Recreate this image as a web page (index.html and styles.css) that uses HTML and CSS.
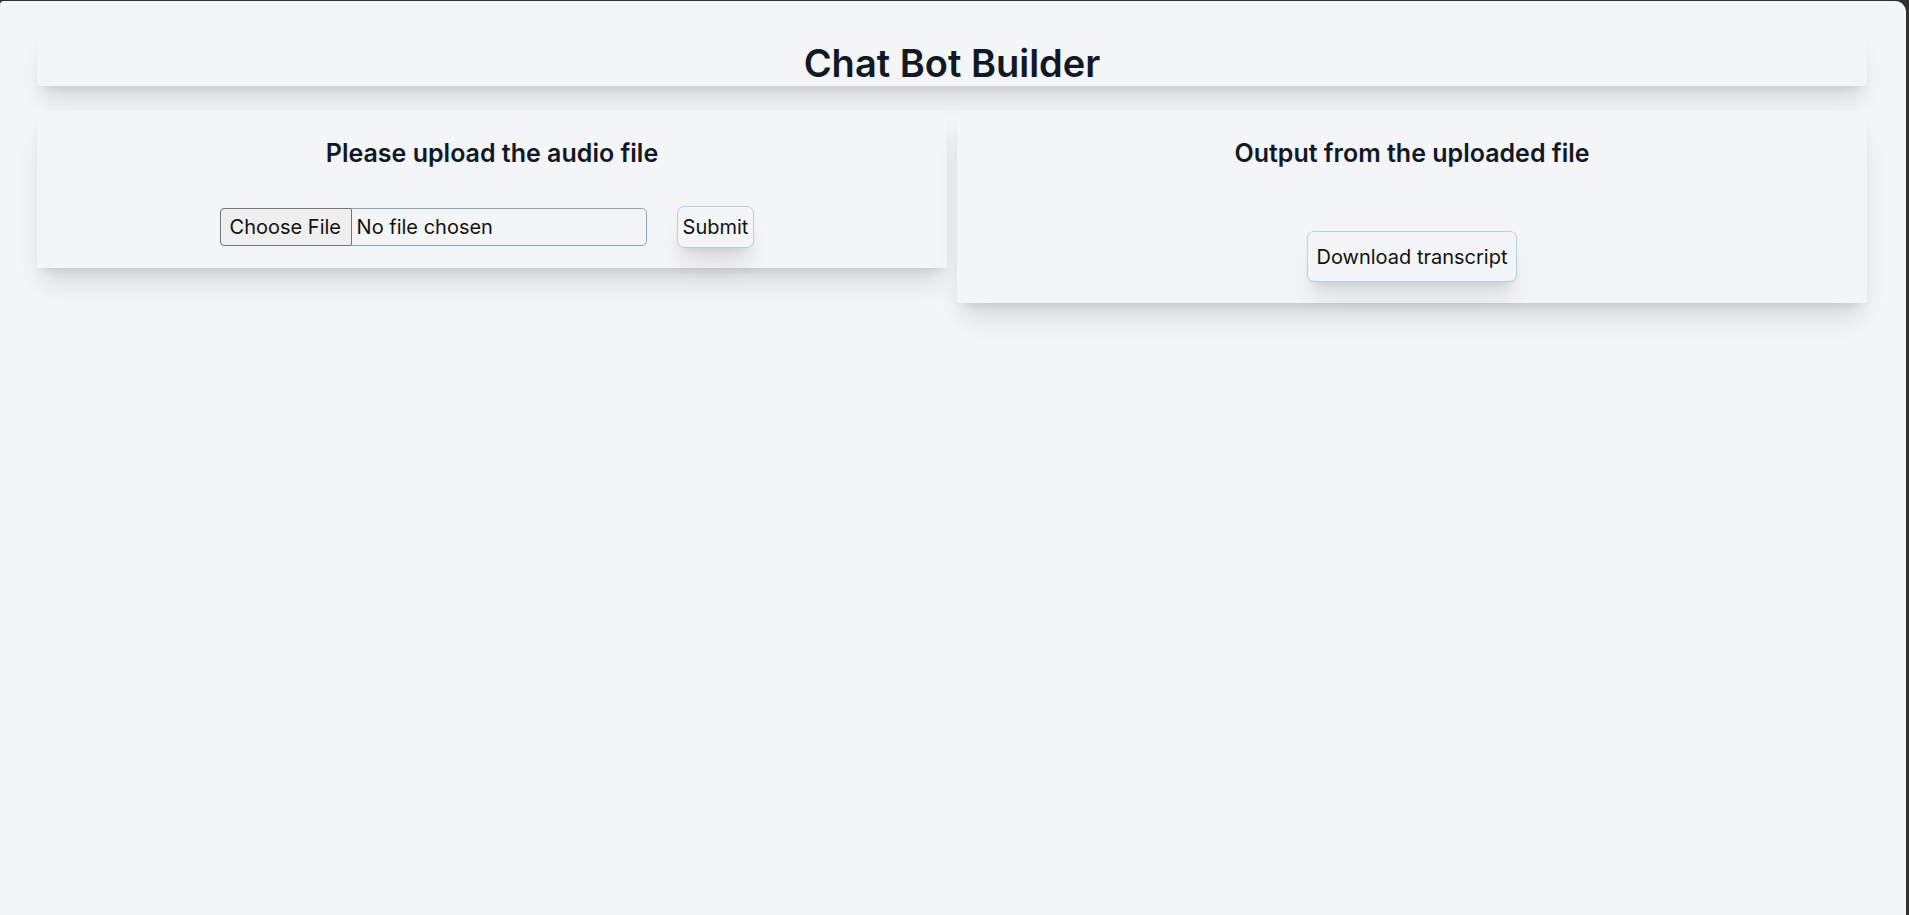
FILE: index.html
```html
<!DOCTYPE html>
<html lang="en">
<head>
<meta charset="utf-8">
<title>Chat Bot Builder</title>
<link rel="stylesheet" href="styles.css">
</head>
<body>
<div class="page">
  <header class="app-header">
    <h1 class="app-title">Chat Bot Builder</h1>
  </header>
  <main class="panels">
    <section class="panel panel-upload">
      <h2 class="panel-title">Please upload the audio file</h2>
      <form class="upload-row">
        <label class="file-input">
          <span class="file-btn">Choose File</span>
          <span class="file-name">No file chosen</span>
        </label>
        <button type="button" class="btn btn-submit">Submit</button>
      </form>
    </section>
    <section class="panel panel-output">
      <h2 class="panel-title">Output from the uploaded file</h2>
      <div class="output-area"></div>
      <div class="download-row">
        <button type="button" class="btn btn-download">Download transcript</button>
      </div>
    </section>
  </main>
</div>
</body>
</html>
```

FILE: styles.css
```css
html {
  background: #2f2f2f;
  height: 100%;
}
body {
  margin: 1px 3px 0 0;
  min-height: calc(100% - 1px);
  background: #f4f5f7;
  border-radius: 4px 11px 0 0;
  font-family: Inter, "Noto Sans", sans-serif;
  color: #111827;
}
.page {
  padding: 28px 39px 0 37px;
}
.app-header {
  height: 57px;
  box-sizing: border-box;
  padding-top: 13px;
  background: #f4f5f7;
  box-shadow: 0 20px 25px -5px rgba(0,0,0,0.1), 0 8px 10px -6px rgba(0,0,0,0.1);
  text-align: center;
}
.app-title {
  margin: 0;
  font-size: 38px;
  line-height: 42px;
  font-weight: 600;
}
.panels {
  margin-top: 25px;
  display: grid;
  grid-template-columns: 1fr 1fr;
  gap: 10px;
  align-items: start;
}
.panel {
  background: #f4f5f7;
  box-shadow: 0 20px 25px -5px rgba(0,0,0,0.11), 0 8px 10px -6px rgba(0,0,0,0.11);
  padding: 26px 0 20px;
  text-align: center;
}
.panel-output {
  padding-bottom: 21px;
}
.panel-title {
  margin: 0;
  font-size: 25px;
  line-height: 32px;
  font-weight: 600;
}
.upload-row {
  margin: 37px 0 0;
  display: flex;
  justify-content: center;
  align-items: center;
  gap: 30px;
  padding-right: 10px;
}
.file-input {
  box-sizing: border-box;
  width: 427px;
  height: 38px;
  display: flex;
  align-items: stretch;
  border: 1px solid #8fa4b2;
  border-radius: 5px;
  font-size: 20px;
  color: #111;
  text-align: left;
}
.file-btn {
  display: flex;
  align-items: center;
  padding: 0 9px;
  margin: -1px 0 -1px -1px;
  background: #efefef;
  border: 1px solid #767676;
  border-radius: 4px 2px 2px 4px;
  width: 132px;
  box-sizing: border-box;
}
.file-name {
  display: flex;
  align-items: center;
  padding-left: 5px;
}
.btn {
  font-family: Inter, "Noto Sans", sans-serif;
  font-size: 20px;
  color: #111;
  background: #f4f5f7;
  border: 1px solid #b5d0de;
  border-radius: 7px;
  box-shadow: 0 20px 25px -5px rgba(0,0,0,0.1), 0 8px 10px -6px rgba(0,0,0,0.1);
  cursor: pointer;
}
.btn-submit {
  height: 42px;
  padding: 0 5px;
}
.output-area {
  height: 30px;
}
.download-row {
  margin-top: 32px;
  display: flex;
  justify-content: center;
}
.btn-download {
  height: 51px;
  padding: 0 9px;
}
```
